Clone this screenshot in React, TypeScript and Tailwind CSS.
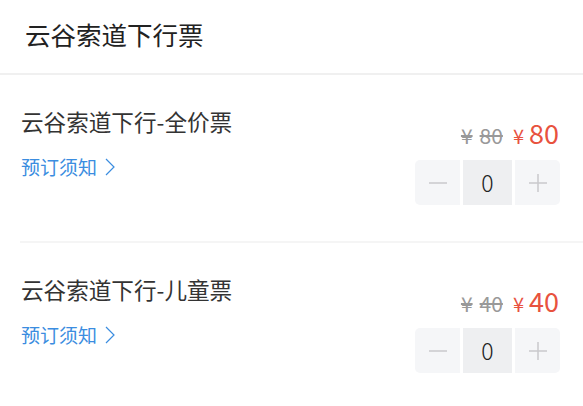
import { useState } from 'react';

type Ticket = { id: number; name: string; original: number; price: number };

const tickets: Ticket[] = [
  { id: 1, name: '云谷索道下行-全价票', original: 80, price: 80 },
  { id: 2, name: '云谷索道下行-儿童票', original: 40, price: 40 },
];

function Stepper() {
  const [count, setCount] = useState(0);
  return (
    <div className="flex gap-[3px]">
      <button
        onClick={() => setCount(Math.max(0, count - 1))}
        className="w-[45px] h-[45px] rounded-l-[5px] bg-[#f5f6f8] flex items-center justify-center"
      >
        <svg width="20" height="20" viewBox="0 0 20 20">
          <path d="M1 10h18" stroke="#c9c9cc" strokeWidth="1.5" />
        </svg>
      </button>
      <div className="w-[49px] h-[45px] bg-[#eeeff1] flex items-center justify-center text-[23px] font-light text-[#222]">
        {count}
      </div>
      <button
        onClick={() => setCount(count + 1)}
        className="w-[45px] h-[45px] rounded-r-[5px] bg-[#f5f6f8] flex items-center justify-center"
      >
        <svg width="20" height="20" viewBox="0 0 20 20">
          <path d="M1 10h18M10 1v18" stroke="#c9c9cc" strokeWidth="1.5" />
        </svg>
      </button>
    </div>
  );
}

export default function App() {
  return (
    <div className="w-[583px] h-[406px] overflow-hidden bg-white font-['Noto_Sans_CJK_SC',sans-serif]">
      {/* Header */}
      <div className="h-[75px] pl-[25px] pt-[17px] border-b-2 border-[#f0f0f0]">
        <h1 className="text-[25.5px] leading-[34px] font-normal text-[#222]">云谷索道下行票</h1>
      </div>

      <div className="pl-[20px]">
        {tickets.map((t) => (
          <div key={t.id} className="flex justify-between pr-[23px] pb-[36px] border-b-2 border-[#f5f5f5]">
            <div className="pt-[32px] pl-[1px]">
              <div className="text-[22.6px] leading-[30px] text-[#333]">{t.name}</div>
              <div className="mt-[17px] flex items-center gap-[8px] text-[19px] leading-[26px] text-[#3b8de0]">
                <span>预订须知</span>
                <svg width="10" height="18" viewBox="0 0 10 18">
                  <path d="M1 1l8 8-8 8" fill="none" stroke="#3b8de0" strokeWidth="1.2" />
                </svg>
              </div>
            </div>
            <div className="pt-[42px] flex flex-col items-end">
              <div className="h-[32px] flex items-end gap-[10px] pr-[1px]">
                <span className="text-[21px] leading-[27px] text-[#999] line-through">
                  ¥<span className="ml-[7px]">{t.original}</span>
                </span>
                <span className="flex items-baseline text-[#e8523e]">
                  <span className="text-[20px] leading-[26px] mr-[5px]">¥</span>
                  <span className="text-[27px] leading-[32px]">{t.price}</span>
                </span>
              </div>
              <div className="mt-[11px]">
                <Stepper />
              </div>
            </div>
          </div>
        ))}
      </div>
    </div>
  );
}
